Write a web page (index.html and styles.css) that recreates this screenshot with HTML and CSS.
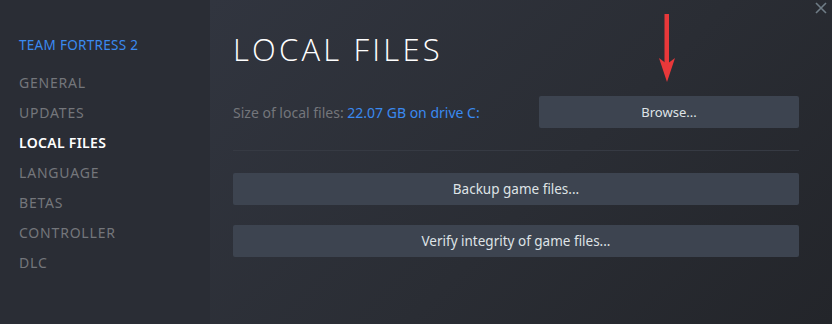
FILE: index.html
```html
<!DOCTYPE html>
<html lang="en">
<head>
  <meta charset="UTF-8" />
  <title>Properties - Team Fortress 2</title>
  <link rel="stylesheet" href="styles.css">
</head>
<body>
  <div class="window">
    <nav class="sidebar">
      <div class="game-title">TEAM FORTRESS 2</div>
      <ul class="menu">
        <li>GENERAL</li>
        <li>UPDATES</li>
        <li class="active">LOCAL FILES</li>
        <li>LANGUAGE</li>
        <li>BETAS</li>
        <li>CONTROLLER</li>
        <li>DLC</li>
      </ul>
    </nav>
    <main class="content">
      <h1>LOCAL FILES</h1>
      <div class="size-row">
        <p class="size">Size of local files: <span class="value">22.07 GB on drive C:</span></p>
        <button class="btn btn-browse">Browse...</button>
        <svg class="arrow" width="18" height="70" viewBox="0 0 18 70">
          <rect x="6.5" y="0" width="4.5" height="50" fill="#e8383a" />
          <path d="M1 44 L9 50 L17 44 L9 68 Z" fill="#e8383a" />
        </svg>
      </div>
      <hr class="divider">
      <button class="btn">Backup game files...</button>
      <button class="btn">Verify integrity of game files...</button>
    </main>
    <svg class="close" width="12" height="12" viewBox="0 0 12 12">
      <path d="M1 1 L11 11 M11 1 L1 11" stroke="#6f7c86" stroke-width="1.6" />
    </svg>
  </div>
</body>
</html>
```

FILE: styles.css
```css
/* Steam properties dialog */
:root { --side: #2a2d35; --blue: #3a8af0; --muted: #74767b; --btn: #3d4450; --btn-text: #dfe3e6; }
* { margin: 0; padding: 0; box-sizing: border-box; }
body {
  font-family: 'Noto Sans', 'Open Sans', sans-serif;
  background: #23262c;
  width: 832px; height: 324px; overflow: hidden;
}
.window { display: flex; height: 324px; position: relative; }
.sidebar {
  width: 210px; flex-shrink: 0; background: var(--side);
  padding: 36px 0 0 19px;
}
.game-title { color: var(--blue); font-size: 13.5px; letter-spacing: 0.3px; line-height: 18px; margin-bottom: 14px; }
.menu { list-style: none; }
.menu li {
  color: var(--muted); font-size: 14px; letter-spacing: 0.8px;
  line-height: 30px; height: 30px;
}
.menu li.active { color: #fff; font-weight: 600; letter-spacing: 0.3px; }
.content {
  flex: 1;
  background: linear-gradient(135deg, #31353f 0%, #2a2d34 55%, #23252a 100%);
  padding: 28px 33px 0 23px;
}
h1 {
  font-family: 'Open Sans', 'Noto Sans', sans-serif;
  font-weight: 300; font-size: 31px; letter-spacing: 3.2px;
  color: #fff; line-height: 42px; margin-bottom: 26px;
}
.size-row { display: flex; align-items: center; justify-content: space-between; position: relative; }
.size { color: var(--muted); font-size: 14px; }
.size .value { color: var(--blue); }
.btn {
  display: block; width: 100%; height: 32px;
  background: var(--btn); color: var(--btn-text);
  border: none; border-radius: 2px;
  font-family: inherit; font-size: 13.5px;
  margin-bottom: 20px;
}
.btn-browse { width: 260px; margin-bottom: 0; font-size: 13px; }
.arrow { position: absolute; right: 123px; top: -82px; }
.divider { border: none; border-top: 1px solid #363a43; margin: 22px 0 22px; }
.close { position: absolute; right: 5px; top: 2px; }
```
